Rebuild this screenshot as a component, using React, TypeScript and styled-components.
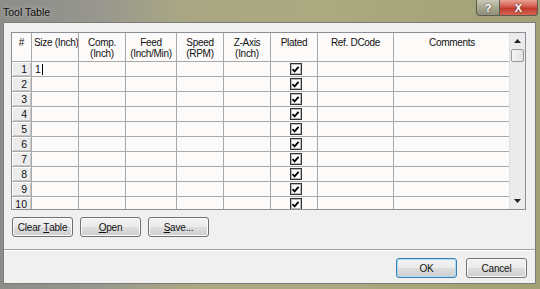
import React from "react";
import styled, { createGlobalStyle } from "styled-components";

const Global = createGlobalStyle`
  html, body { margin: 0; padding: 0; }
  body { width: 540px; height: 289px; overflow: hidden; font-family: "Liberation Sans", Arial, sans-serif; }
`;

const Window = styled.div`
  width: 540px;
  height: 289px;
  box-sizing: border-box;
  display: flex;
  flex-direction: column;
  background: linear-gradient(90deg, #8c8c8a 0%, #97978f 18%, #a9a783 34%, #aba97f 60%, #a2a176 100%);
  padding: 0 4px 5px 3px;
`;

const TitleBar = styled.div`
  height: 22px;
  display: flex;
  align-items: flex-start;
  margin-left: -3px;
  margin-right: -2px;
`;

const Title = styled.div`
  font-size: 10.5px;
  color: #111;
  padding: 6px 0 0 3px;
  flex: 1;
  text-shadow: 0 0 6px rgba(255,255,255,0.6);
`;

const CaptionButton = styled.div<{ $kind: "help" | "close" }>`
  height: 16px;
  width: ${(p) => (p.$kind === "help" ? 24 : 38)}px;
  box-sizing: border-box;
  display: flex;
  align-items: center;
  justify-content: center;
  font-size: 11px;
  font-weight: bold;
  color: #fff;
  border: 1px solid #5a5a50;
  border-top: none;
  border-left: ${(p) => (p.$kind === "close" ? "none" : "1px solid #5a5a50")};
  border-radius: ${(p) => (p.$kind === "help" ? "0 0 0 4px" : "0 0 4px 0")};
  background: ${(p) =>
    p.$kind === "help"
      ? "linear-gradient(180deg, #c9c9b8 0%, #a8a890 50%, #8f8f78 100%)"
      : "linear-gradient(180deg, #e8a396 0%, #d2574a 45%, #c13a2c 55%, #d4654f 100%)"};
  text-shadow: 0 0 2px #333;
`;

const Client = styled.div`
  flex: 1;
  background: #f0f0f0;
  border: 1px solid #7d7d78;
  display: flex;
  flex-direction: column;
`;

const Main = styled.div`
  padding: 9px 9px 0 7px;
  display: flex;
  flex-direction: column;
  gap: 7px;
  height: 226px;
  box-sizing: border-box;
`;

const GridBox = styled.div`
  width: 515px;
  height: 178px;
  box-sizing: border-box;
  border: 1px solid #8a8e96;
  display: flex;
  background: #fcfbf9;
  overflow: hidden;
`;

const Table = styled.div`
  flex: 1;
  display: flex;
  flex-direction: column;
  overflow: hidden;
`;

const Row = styled.div<{ $h: number }>`
  display: flex;
  height: ${(p) => p.$h}px;
  flex: none;
`;

const HeadCell = styled.div<{ $w: number; $align: string }>`
  width: ${(p) => p.$w}px;
  flex: none;
  box-sizing: border-box;
  border-right: 1px solid #a9a9a9;
  border-bottom: 1px solid #a9a9a9;
  font-size: 10px;
  line-height: 11px;
  letter-spacing: -0.3px;
  color: #111;
  text-align: ${(p) => p.$align};
  padding: 4px 1px 0 ${(p) => (p.$align === "left" ? 2 : 1)}px;
  white-space: nowrap;
  overflow: hidden;
`;

const Cell = styled.div<{ $w: number }>`
  width: ${(p) => p.$w}px;
  flex: none;
  box-sizing: border-box;
  border-right: 1px solid #a9a9a9;
  border-bottom: 1px solid #a9a9a9;
  font-size: 10.5px;
  color: #111;
  display: flex;
  align-items: center;
  justify-content: center;
  padding-left: 3px;
  &:nth-child(2) { justify-content: flex-start; }
`;

const RowHeader = styled.div<{ $w: number }>`
  width: ${(p) => p.$w}px;
  flex: none;
  box-sizing: border-box;
  border-right: 1px solid #a9a9a9;
  border-bottom: 1px solid #a9a9a9;
  background: #ececec;
  box-shadow: inset 1px 1px 0 #ffffff, inset -1px -1px 0 #c8c8c8;
  font-size: 10.5px;
  color: #111;
  display: flex;
  align-items: center;
  justify-content: flex-end;
  padding-right: 4px;
`;

const Caret = styled.span`
  display: inline-block;
  width: 1px;
  height: 11px;
  background: #000;
  margin-left: 1px;
`;

const Check = styled.div`
  width: 12px;
  height: 12px;
  box-sizing: border-box;
  border: 1px solid #333;
  background: #fff;
  box-shadow: inset 0 0 0 1px #bbb;
  display: flex;
  align-items: center;
  justify-content: center;
`;

const Scrollbar = styled.div`
  width: 15px;
  flex: none;
  background: #ebebeb;
  border-left: 1px solid #e0e0e0;
  display: flex;
  flex-direction: column;
  align-items: center;
`;

const Arrow = styled.div`
  height: 16px;
  width: 15px;
  display: flex;
  align-items: center;
  justify-content: center;
`;

const Thumb = styled.div`
  width: 13px;
  height: 13px;
  box-sizing: border-box;
  border: 1px solid #9a9a9a;
  border-radius: 2px;
  background: linear-gradient(90deg, #f4f4f4, #e2e2e2);
`;

const Spacer = styled.div`
  flex: 1;
`;

const ButtonRow = styled.div`
  display: flex;
  gap: 7px;
  padding-left: 1px;
`;

const Button = styled.div<{ $default?: boolean }>`
  width: 61px;
  height: 20px;
  box-sizing: border-box;
  border: 1px solid ${(p) => (p.$default ? "#3c7fb1" : "#707070")};
  border-radius: 3px;
  background: linear-gradient(180deg, #f2f2f2 0%, #ebebeb 48%, #dddddd 52%, #cfcfcf 100%);
  box-shadow: inset 0 0 0 1px ${(p) => (p.$default ? "#a6dcf6" : "#fbfbfb")};
  font-size: 10px;
  letter-spacing: -0.2px;
  white-space: nowrap;
  color: #111;
  display: flex;
  align-items: center;
  justify-content: center;
  u { text-decoration: underline; }
`;

const Separator = styled.div`
  height: 1px;
  background: #a0a0a0;
  border-bottom: 1px solid #ffffff;
`;

const Footer = styled.div`
  flex: 1;
  display: flex;
  justify-content: flex-end;
  align-items: flex-start;
  gap: 9px;
  padding: 7px 8px 0 0;
  background: #f0f0f0;
`;

type Col = { w: number; label: string[]; align?: string };
const cols: Col[] = [
  { w: 20, label: ["#"] },
  { w: 47, label: ["Size (Inch)"], align: "left" },
  { w: 47, label: ["Comp.", "(Inch)"] },
  { w: 51, label: ["Feed", "(Inch/Min)"] },
  { w: 47, label: ["Speed", "(RPM)"] },
  { w: 47, label: ["Z-Axis", "(Inch)"] },
  { w: 47, label: ["Plated"] },
  { w: 76, label: ["Ref. DCode"] },
  { w: 117, label: ["Comments"] },
];

const CheckIcon = () => (
  <svg width="9" height="9" viewBox="0 0 9 9">
    <path d="M1.5 4.2 L3.6 6.4 L7.6 1.8" stroke="#000" strokeWidth="1.8" fill="none" />
  </svg>
);

export default function App() {
  const rows = Array.from({ length: 10 }, (_, i) => i + 1);
  return (
    <>
      <Global />
      <Window>
        <TitleBar>
          <Title>Tool Table</Title>
          <CaptionButton $kind="help">?</CaptionButton>
          <CaptionButton $kind="close">X</CaptionButton>
        </TitleBar>
        <Client>
          <Main>
            <GridBox>
              <Table>
                <Row $h={29}>
                  {cols.map((c, i) => (
                    <HeadCell key={i} $w={c.w} $align={c.align || "center"}>
                      {c.label.map((l, j) => (
                        <div key={j}>{l}</div>
                      ))}
                    </HeadCell>
                  ))}
                </Row>
                {rows.map((r) => (
                  <Row $h={15} key={r}>
                    <RowHeader $w={cols[0].w}>{r}</RowHeader>
                    {cols.slice(1).map((c, i) => (
                      <Cell key={i} $w={c.w}>
                        {r === 1 && i === 0 ? (
                          <>
                            1<Caret />
                          </>
                        ) : null}
                        {i === 5 ? (
                          <Check>
                            <CheckIcon />
                          </Check>
                        ) : null}
                      </Cell>
                    ))}
                  </Row>
                ))}
              </Table>
              <Scrollbar>
                <Arrow>
                  <svg width="7" height="4" viewBox="0 0 7 4">
                    <path d="M0 4 L3.5 0 L7 4 Z" fill="#222" />
                  </svg>
                </Arrow>
                <Thumb />
                <Spacer />
                <Arrow>
                  <svg width="7" height="4" viewBox="0 0 7 4">
                    <path d="M0 0 L3.5 4 L7 0 Z" fill="#222" />
                  </svg>
                </Arrow>
              </Scrollbar>
            </GridBox>
            <ButtonRow>
              <Button>
                Clear&nbsp;<u>T</u>able
              </Button>
              <Button>
                <u>O</u>pen
              </Button>
              <Button>
                <u>S</u>ave...
              </Button>
            </ButtonRow>
          </Main>
          <Separator />
          <Footer>
            <Button $default>OK</Button>
            <Button>Cancel</Button>
          </Footer>
        </Client>
      </Window>
    </>
  );
}
